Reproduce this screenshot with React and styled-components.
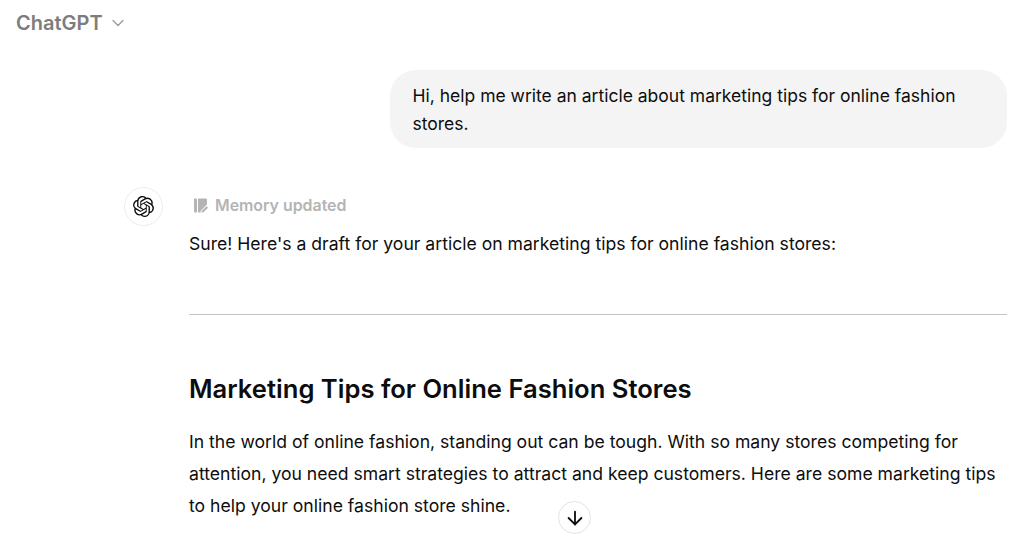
import React from 'react';
import styled, { createGlobalStyle } from 'styled-components';
import { SiOpenai } from 'react-icons/si';
import { ChevronDown, ArrowDown } from 'lucide-react';

const GlobalStyle = createGlobalStyle`
  html, body {
    margin: 0;
    height: 100%;
    overflow: hidden;
    background: #fff;
  }
  body {
    font-family: Inter, "Liberation Sans", sans-serif;
    color: #0d0d0d;
  }
`;

const Page = styled.div`
  position: relative;
  width: 1024px;
  height: 539px;
  overflow: hidden;
`;

const Header = styled.header`
  display: flex;
  align-items: center;
  gap: 5px;
  height: 46px;
  padding-left: 16px;
`;

const ModelName = styled.span`
  font-size: 20px;
  font-weight: 600;
  color: #7d7d7d;
`;

const Thread = styled.main`
  display: flex;
  flex-direction: column;
  padding: 24px 17px 0 124px;
`;

const UserRow = styled.div`
  display: flex;
  justify-content: flex-end;
`;

const Bubble = styled.div`
  box-sizing: border-box;
  width: 617px;
  padding: 12px 23px 10px 22.5px;
  background: #f4f4f4;
  border-radius: 26px;
  font-size: 17.5px;
  line-height: 28px;
`;

const AssistantRow = styled.div`
  display: flex;
  gap: 26px;
  margin-top: 39px;
`;

const Avatar = styled.div`
  flex: none;
  display: flex;
  align-items: center;
  justify-content: center;
  width: 39px;
  height: 39px;
  box-sizing: border-box;
  border: 1px solid #ececec;
  border-radius: 50%;
  font-size: 21px;
  color: #0d0d0d;
`;

const Content = styled.div`
  flex: 1;
  min-width: 0;
`;

const Memory = styled.div`
  display: flex;
  align-items: center;
  gap: 5px;
  height: 36px;
  margin-bottom: 5px;
  padding-left: 4px;
  font-size: 15.9px;
  font-weight: 600;
  color: #b4b4b4;
`;

const Paragraph = styled.p`
  margin: 0;
  font-size: 17.6px;
  line-height: 32px;
`;

const Rule = styled.hr`
  margin: 54px 0 0;
  border: 0;
  border-top: 1px solid #c4c4c4;
`;

const Heading = styled.h2`
  margin: 56px 0 0;
  font-size: 25.6px;
  line-height: 36px;
  font-weight: 600;
`;

const Body = styled(Paragraph)`
  margin-top: 19px;
`;

const ScrollButton = styled.button`
  position: absolute;
  left: 558px;
  top: 501px;
  display: flex;
  align-items: center;
  justify-content: center;
  width: 33px;
  height: 33px;
  padding: 0;
  background: #fff;
  border: 1px solid #e3e3e3;
  border-radius: 50%;
  color: #0d0d0d;
`;

function MemoryIcon() {
  return (
    <svg width="17" height="17" viewBox="0 0 17 17" fill="#b4b4b4">
      <rect x="1" y="1.5" width="3" height="14" rx="1" />
      <path d="M5 1.5h8a1 1 0 0 1 1 1v5L7.6 13.9v1.6H6a1 1 0 0 1-1-1z" />
      <path d="M13.6 9.2l1.5 1.5-5 4.8H8.6v-1.5z" />
    </svg>
  );
}

export default function App() {
  return (
    <Page>
      <GlobalStyle />
      <Header>
        <ModelName>ChatGPT</ModelName>
        <ChevronDown size={20} color="#9b9b9b" strokeWidth={1.6} />
      </Header>
      <Thread>
        <UserRow>
          <Bubble>Hi, help me write an article about marketing tips for online fashion stores.</Bubble>
        </UserRow>
        <AssistantRow>
          <Avatar>
            <SiOpenai />
          </Avatar>
          <Content>
            <Memory>
              <MemoryIcon />
              Memory updated
            </Memory>
            <Paragraph>Sure! Here's a draft for your article on marketing tips for online fashion stores:</Paragraph>
            <Rule />
            <Heading>Marketing Tips for Online Fashion Stores</Heading>
            <Body>
              In the world of online fashion, standing out can be tough. With so many stores competing for attention,
              you need smart strategies to attract and keep customers. Here are some marketing tips to help your online
              fashion store shine.
            </Body>
          </Content>
        </AssistantRow>
      </Thread>
      <ScrollButton>
        <ArrowDown size={22} strokeWidth={2} />
      </ScrollButton>
    </Page>
  );
}
